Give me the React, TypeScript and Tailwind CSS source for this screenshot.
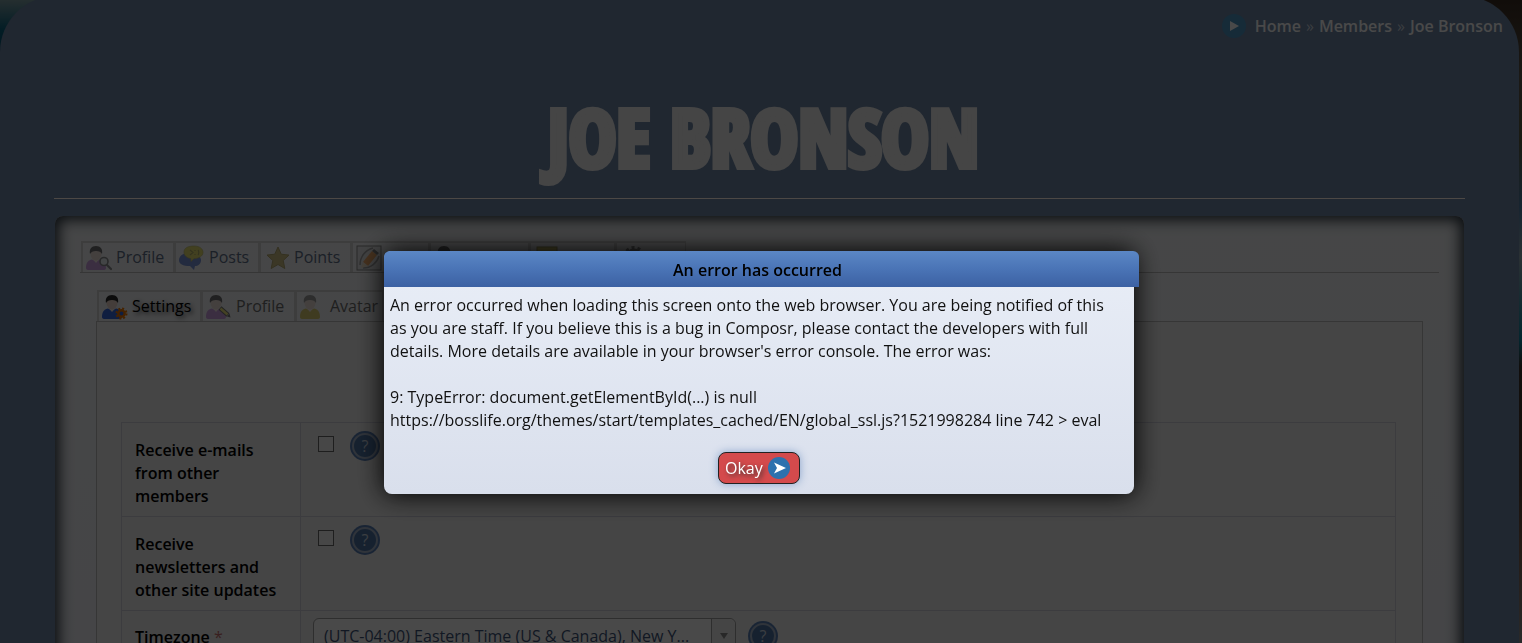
import React, { useState } from 'react';
import clsx from 'clsx';

interface PersonProps {
  shirt: string;
  hair?: string;
  children?: React.ReactNode;
}

function Person({ shirt, hair = '#2b2b2b', children }: PersonProps) {
  return (
    <svg viewBox="0 0 26 26" className="h-[26px] w-[26px] shrink-0">
      <path d="M0 23c0-6 3-8 6-8.500l4 2 4-2c3 .5 6 2.500 6 8.500 0 1.500-1 2-3 2H3c-2 0-3-.5-3-2z" fill={shirt} />
      <path d="M6.500 14h7L10 18z" fill="#f3e0d8" />
      <ellipse cx="10" cy="9" rx="5.500" ry="6.500" fill="#e3cdc2" />
      <path d="M4 9C3 4 5.500 1 10 1s7 3 6 8c-1-2-3-3-6-3s-5 1-6 3z" fill={hair} />
      {children}
    </svg>
  );
}

function MagnifierMark() {
  return (
    <>
      <circle cx="18" cy="16.500" r="4" fill="#dfe4ea" stroke="#555" strokeWidth="1.600" />
      <path d="M21 20l4 4" stroke="#555" strokeWidth="2.200" strokeLinecap="round" />
    </>
  );
}

function CogMark() {
  return (
    <g transform="translate(19.500 19.500)">
      <circle r="5" fill="none" stroke="#e87400" strokeWidth="2" strokeDasharray="2 1.930" />
      <circle r="3.200" fill="#3565d8" stroke="#e87400" strokeWidth="2.400" />
    </g>
  );
}

function PencilMark() {
  return (
    <>
      <path d="M14 14l8 7" stroke="#333" strokeWidth="4.400" />
      <path d="M14.500 14.500l7 6" stroke="#e5d63b" strokeWidth="2.400" />
      <path d="M21 22.500l2.500-3 1 4z" fill="#333" />
    </>
  );
}

function PostsIcon() {
  return (
    <svg viewBox="0 0 26 26" className="h-[26px] w-[26px] shrink-0">
      <path d="M0 15c0-4 4-7 10-7s12 3 12 7-3 6-6 6l-1 4-4-4C4 21 0 19 0 15z" fill="#3a5fc4" />
      <path d="M5 7c0-4 4-6 10-6s9 3 9 6.500-4 6-9 6l-3 3v-3C8 13 5 11 5 7z" fill="#d8cf2a" stroke="#9a941f" strokeWidth=".6" />
      <path d="M11 5l3 2.500-3 2.500M16 5v1M16 9v1M19 5c1 1 1 4 0 5" fill="none" stroke="#8b851c" strokeWidth="1.200" />
    </svg>
  );
}

function StarIcon() {
  return (
    <svg viewBox="0 0 26 26" className="h-[26px] w-[26px] shrink-0">
      <path d="M14 2l3.200 7.200 7.800.9-5.800 5.400 1.600 8-6.800-4-6.800 4 1.600-8L3 10.100l7.800-.9z" fill="#b59f48" stroke="#8f7c2a" />
    </svg>
  );
}

function BlogIcon() {
  return (
    <svg viewBox="0 0 26 26" className="h-[26px] w-[26px] shrink-0">
      <rect x="1" y="1" width="24" height="24" fill="#d8d8d8" stroke="#555" />
      <path d="M4 20C4 12 9 5 17 3M7 23c8 0 14-5 16-12" fill="none" stroke="#777" strokeWidth="1.500" />
      <path d="M7 17l9-11 5 4-9 11z" fill="#e8801f" />
      <path d="M16 6l2-2 5 4-2 2z" fill="#444" />
      <path d="M7 17l5 4-7 2z" fill="#e9d3ae" />
    </svg>
  );
}

function NoteIcon() {
  return (
    <svg viewBox="0 0 26 26" className="h-[26px] w-[26px] shrink-0">
      <rect x="3" y="2" width="20" height="22" fill="#c9b830" stroke="#7b711c" />
    </svg>
  );
}

function GearIcon() {
  return (
    <svg viewBox="0 0 26 26" className="h-[26px] w-[26px] shrink-0">
      <circle cx="14" cy="12" r="9.500" fill="none" stroke="#555" strokeWidth="3" strokeDasharray="3 3" />
      <circle cx="14" cy="12" r="6.500" fill="none" stroke="#555" strokeWidth="4" />
    </svg>
  );
}

interface TabProps {
  icon: React.ReactNode;
  label?: string;
  active?: boolean;
  muted?: boolean;
  className?: string;
}

function Tab({ icon, label, active, muted, className }: TabProps) {
  return (
    <button
      type="button"
      className={clsx(
        'flex h-[31px] items-center gap-1 border-t-2 border-r border-l-2 border-[#cccccc] pr-1 pl-[3px]',
        active && 'text-black [text-shadow:2px_2px_4px_#444]',
        !active && (muted ? 'text-[#6a6a6a]' : 'text-[#5d6b84]'),
        className
      )}
    >
      <span className={active ? '' : 'opacity-65'}>{icon}</span>
      {label}
    </button>
  );
}

function HelpButton() {
  return (
    <button type="button" className="h-[30px] w-[30px] rounded-full bg-[#567bb0] p-0.5">
      <span className="flex h-[26px] w-[26px] items-center justify-center rounded-full border-2 border-[#a0aec2] bg-[#4c719f] text-[#c5cfdc]">
        ?
      </span>
    </button>
  );
}

interface CheckRowProps {
  id: string;
  label: string;
}

function CheckRow({ id, label }: CheckRowProps) {
  const [checked, setChecked] = useState(false);

  return (
    <tr className="h-[94px] border-b border-[#c8c8d4] align-top">
      <th scope="row" className="border-r border-[#c8c8d4] pt-4 pr-5 pb-2 pl-[13px] text-left font-semibold">
        <label htmlFor={id} className="block">{label}</label>
      </th>
      <td className="px-[17px] pt-2">
        <div className="flex gap-4">
          <input
            id={id}
            type="checkbox"
            checked={checked}
            onChange={(e) => setChecked(e.target.checked)}
            className="mt-[5px] h-4 w-4 appearance-none border border-[#666] bg-[#eee]"
          />
          <HelpButton />
        </div>
      </td>
    </tr>
  );
}

function Breadcrumbs() {
  return (
    <nav className="flex h-12 items-center justify-end gap-[5px] pt-3 pr-4 font-semibold text-[#f4f4f4]">
      <svg viewBox="0 0 24 24" className="mr-1 h-6 w-6">
        <circle cx="12" cy="12" r="12" fill="#4a90bd" />
        <path d="M8 7l9 5-9 5z" fill="#f4f4f4" />
      </svg>
      <a href="#home">Home</a>
      <span className="font-normal text-[#c4ccd8]">»</span>
      <a href="#members">Members</a>
      <span className="font-normal text-[#c4ccd8]">»</span>
      <a href="#profile">Joe Bronson</a>
    </nav>
  );
}

function ErrorDialog({ onClose }: { onClose: () => void }) {
  return (
    <div className="fixed inset-0 flex items-start justify-center bg-black/70 pt-[251px] pr-1">
      <div
        role="alertdialog"
        aria-labelledby="error-title"
        className="w-[750px] rounded-lg bg-linear-to-b from-[#e9eef7] to-[#d9dfec] text-[#111] shadow-[0_0_26px_1px_#000]"
      >
        <h2
          id="error-title"
          className="-mr-[5px] flex h-9 items-center justify-center rounded-t-md bg-linear-to-b from-[#5b87c5] via-[#4a74b6] to-[#3c61a3] pt-0.5 pr-2 font-semibold text-black"
        >
          An error has occurred
        </h2>
        <div className="px-1.5 pt-[7px] pb-2.5">
          <p className="pr-5">
            An error occurred when loading this screen onto the web browser. You are being notified of this as you are
            staff. If you believe this is a bug in Composr, please contact the developers with full details. More
            details are available in your browser's error console. The error was:
          </p>
          <p className="mt-[23px]">
            9: TypeError: document.getElementById(...) is null
            <br />
            https://bosslife.org/themes/start/templates_cached/EN/global_ssl.js?1521998284 line 742 &gt; eval
          </p>
          <div className="mt-5 flex justify-center">
            <button
              type="button"
              onClick={onClose}
              className="flex h-8 w-[82px] items-center gap-[5px] rounded-lg border border-[#222] bg-[#d44a4c] pl-1.5 text-white shadow-[0_0_8px_#8aa4cc] [text-shadow:2px_2px_4px_#333]"
            >
              Okay
              <svg viewBox="0 0 22 22" className="h-[22px] w-[22px]">
                <circle cx="11" cy="11" r="11" fill="#2d71ae" />
                <path d="M6 5.500l12 5.500-12 5.500 3-5.500z" fill="#fff" />
              </svg>
            </button>
          </div>
        </div>
      </div>
    </div>
  );
}

export default function App() {
  const [showError, setShowError] = useState(true);

  return (
    <div className="h-screen overflow-hidden pr-[3px] font-['Open_Sans',sans-serif] text-base leading-[23px] [background:linear-gradient(#7d9a9f,#08607c_50%,#0a4a68)_0_0/60px_60px_no-repeat,linear-gradient(#3a2c22,#5c5548_12%,#57583f_22%,#4d7aa0_32%,#8fa3ad_40%,#0a7f98_53%,#3a3028_57%,#503c30_75%,#7a5a48_85%,#8a8a8a)]">
      <div className="-mt-1 min-h-[calc(100vh+4px)] rounded-t-[56px] bg-[#6b82a0]">
        <Breadcrumbs />
        <div className="px-[54px]">
          <h1 className="mt-10 border-b border-[#fff1e8] pb-2.5 pl-2 text-center font-['Impact','Open_Sans_Condensed','Liberation_Sans_Narrow',sans-serif] text-[80px] leading-[104px] font-black text-[#e6e6e6] uppercase [-webkit-text-stroke:6px_#e6e6e6]">
            Joe Bronson
          </h1>

          <main className="mx-px mt-[17px] h-[900px] rounded-lg bg-linear-to-b from-[#e9ebed] to-[#e4e4ee] px-[25px] pt-[25px] shadow-[inset_0_0_14px_4px_#25303a]">
            <div className="flex border-b border-[#b4b4b4] pl-px">
              <Tab icon={<Person shirt="#b36fd0"><MagnifierMark /></Person>} label="Profile" className="w-[93px]" />
              <Tab icon={<PostsIcon />} label="Posts" className="w-[85px]" />
              <Tab icon={<StarIcon />} label="Points" className="w-[92px]" />
              <Tab icon={<BlogIcon />} className="w-[78px]" />
              <Tab icon={<Person shirt="#5f8fd0" />} className="w-[100px]" />
              <Tab icon={<NoteIcon />} className="w-[86px]" />
              <Tab icon={<GearIcon />} className="w-[71px]" />
            </div>

            <div className="mx-4 mt-[17px]">
              <div className="flex pl-px">
                <Tab icon={<Person shirt="#3565d8"><CogMark /></Person>} label="Settings" active className="w-[104px]" />
                <Tab icon={<Person shirt="#b36fd0"><PencilMark /></Person>} label="Profile" muted className="w-[94px]" />
                <Tab icon={<Person shirt="#c9b52a" hair="#6b6b6b" />} label="Avatar" muted />
              </div>
              <form className="h-[600px] border border-[#b4b4b4] bg-[#e6e6e6] pt-[100px] pr-[26px] pl-6">
                <table className="w-full table-fixed border-collapse border border-[#c8c8d4]">
                  <colgroup>
                    <col className="w-[179px]" />
                    <col />
                  </colgroup>
                  <tbody>
                    <CheckRow id="emails" label="Receive e-mails from other members" />
                    <CheckRow id="newsletters" label="Receive newsletters and other site updates" />
                    <tr className="align-top">
                      <th scope="row" className="border-r border-[#c8c8d4] pt-[15px] pb-2 pl-[13px] text-left font-semibold">
                        <label htmlFor="timezone">
                          Timezone <span className="font-normal text-[#c06a6a]">*</span>
                        </label>
                      </th>
                      <td className="px-3 pt-[7px]">
                        <div className="flex items-center gap-3">
                          <div className="relative">
                            <select
                              id="timezone"
                              className="h-9 w-[423px] appearance-none rounded-md border border-[#999] bg-[#f4f4f4] pl-2.5 text-[#3c5377]"
                            >
                              <option>(UTC-04:00) Eastern Time (US &amp; Canada), New Y...</option>
                            </select>
                            <span className="pointer-events-none absolute inset-y-px right-px flex w-6 items-center justify-center rounded-r-md border-l border-[#999] bg-[#e8e8e8]">
                              <span className="border-x-4 border-t-6 border-x-transparent border-t-[#888]" />
                            </span>
                          </div>
                          <HelpButton />
                        </div>
                      </td>
                    </tr>
                  </tbody>
                </table>
              </form>
            </div>
          </main>
        </div>
      </div>

      {showError && <ErrorDialog onClose={() => setShowError(false)} />}
    </div>
  );
}
